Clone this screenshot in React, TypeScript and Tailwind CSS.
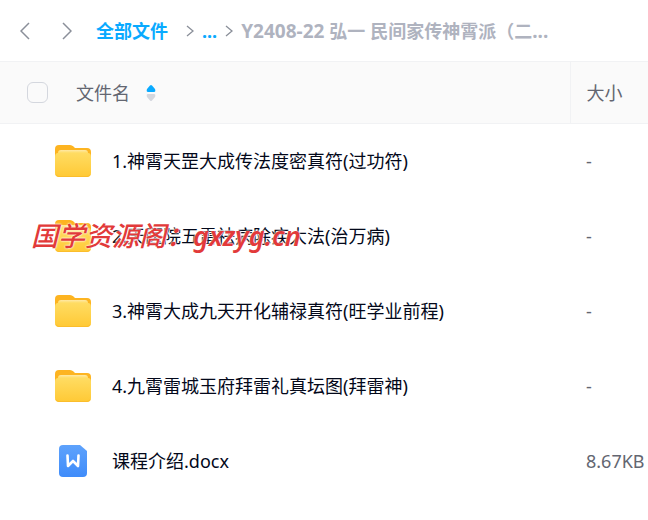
import { useState } from 'react';

const CHEVRON = 'fill-none stroke-[#8a8f99]';

const FILES = [
  { name: '1.神霄天罡大成传法度密真符(过功符)', size: '-', type: 'folder' },
  { name: '2.天医院五雷祛病除疾大法(治万病)', size: '-', type: 'folder' },
  { name: '3.神霄大成九天开化辅禄真符(旺学业前程)', size: '-', type: 'folder' },
  { name: '4.九霄雷城玉府拜雷礼真坛图(拜雷神)', size: '-', type: 'folder' },
  { name: '课程介绍.docx', size: '8.67KB', type: 'doc' },
];

function FolderIcon() {
  return (
    <svg width="36" height="32" viewBox="0 0 36 32" aria-hidden="true">
      <defs>
        <linearGradient id="front" x1="0" y1="0" x2="0" y2="1">
          <stop offset="0" stopColor="#ffdc62" />
          <stop offset="1" stopColor="#ffc935" />
        </linearGradient>
        <linearGradient id="paper" x1="0" y1="0" x2="0" y2="1">
          <stop offset="0" stopColor="#ffe9a6" />
          <stop offset="1" stopColor="#ffdc62" />
        </linearGradient>
      </defs>
      <path d="M0 4Q0 0 4 0H15Q17 0 18.500 1.500L20 3H32Q36 3 36 7V20H0Z" fill="#fdb421" />
      <path d="M0 12Q0 8 3 8H33Q36 8 36 12V28Q36 32 32 32H4Q0 32 0 28Z" fill="url(#front)" />
      <path d="M3 8Q3 5 6 5H30Q33 5 33 8Z" fill="url(#paper)" />
      <path d="M1 29.500Q2 31.500 4 31.500H32Q34 31.500 35 29.500" fill="none" stroke="#fbbd2c" />
    </svg>
  );
}

function DocIcon() {
  return (
    <svg width="28" height="32" viewBox="0 0 28 32" aria-hidden="true">
      <defs>
        <linearGradient id="doc" x1="0" y1="0" x2="0" y2="1">
          <stop offset="0" stopColor="#5ea2fc" />
          <stop offset="1" stopColor="#3f8cfa" />
        </linearGradient>
      </defs>
      <path d="M4 0H21L28 6V28Q28 32 24 32H4Q0 32 0 28V4Q0 0 4 0Z" fill="url(#doc)" />
      <path d="M8.500 10.500L9 21L14 16L19 21L19.500 10.500" fill="none" stroke="#fff" strokeWidth="2.600" strokeLinejoin="round" strokeLinecap="round" />
    </svg>
  );
}

function Crumb() {
  return (
    <svg width="8" height="12" viewBox="0 0 8 12" className={CHEVRON} strokeWidth="1.300" aria-hidden="true">
      <path d="M1 1L7 6L1 11" />
    </svg>
  );
}

export default function App() {
  const [asc, setAsc] = useState(true);
  const [all, setAll] = useState(false);
  const rows = asc ? FILES : [...FILES].reverse();

  return (
    <div className="relative bg-white text-lg leading-6 text-[#03081a] font-['Noto_Sans','Noto_Sans_CJK_SC',sans-serif]">
      <nav className="flex h-[61px] items-center whitespace-nowrap px-5 font-bold">
        <button aria-label="后退" className="mr-8">
          <svg width="10" height="18" viewBox="0 0 10 18" className={CHEVRON} strokeWidth="1.500"><path d="M9 1L1 9L9 17" /></svg>
        </button>
        <button aria-label="前进" className="mr-6">
          <svg width="10" height="18" viewBox="0 0 10 18" className={CHEVRON} strokeWidth="1.500"><path d="M1 1L9 9L1 17" /></svg>
        </button>
        <a href="#" className="mr-[18px] text-[#09aaff]">全部文件</a>
        <Crumb />
        <a href="#" className="mx-2 text-[#09aaff]">...</a>
        <Crumb />
        <span className="ml-2 text-[#afb3bf]">
          <span className="text-[19px]">Y2408-22 </span>弘一<span className="text-[19px]"> </span>民间家传神霄派（二<span className="text-[19px]">...</span>
        </span>
      </nav>

      <table className="w-full table-fixed border-collapse text-left">
        <thead className="border-y border-[#f1f2f4] bg-[#fafafa] text-[#636671]">
          <tr className="h-[62px]">
            <th className="p-0 font-normal">
              <div className="flex items-center pl-[27px]">
                <input
                  type="checkbox"
                  aria-label="全选"
                  checked={all}
                  onChange={(e) => setAll(e.target.checked)}
                  className="mr-7 size-[21px] appearance-none rounded-md border border-[#d4d7de] bg-[#fafafa] checked:bg-[#09aaff]"
                />
                <span>文件名</span>
                <button aria-label="排序" className="ml-4" onClick={() => setAsc(!asc)}>
                  <svg width="10" height="18" viewBox="0 0 10 18">
                    <path d="M4 1.500Q5 .5 6 1.500L9 5Q10 8 8 8H2Q0 8 1 5Z" fill="#09aaff" />
                    <path d="M4 16.500Q5 17.500 6 16.500L9 13Q10 10 8 10H2Q0 10 1 13Z" fill="#d4d7de" />
                  </svg>
                </button>
              </div>
            </th>
            <th className="w-[78px] border-l border-[#f1f2f4] p-0 pl-4 font-normal">大小</th>
          </tr>
        </thead>
        <tbody>
          {rows.map((f) => (
            <tr key={f.name} className="h-[75px]">
              <td className="p-0">
                <div className="flex items-center whitespace-nowrap pl-[55px]">
                  <span className="mr-[21px] flex w-9 justify-center">
                    {f.type === 'folder' ? <FolderIcon /> : <DocIcon />}
                  </span>
                  <span>{f.name}</span>
                </div>
              </td>
              <td className="whitespace-nowrap p-0 pl-4 text-[#636671]">{f.size}</td>
            </tr>
          ))}
        </tbody>
      </table>

      <p className="pointer-events-none absolute left-[31px] top-[218px] whitespace-nowrap text-[27px] leading-9 font-medium italic text-[#e23a3a] [text-shadow:0_0_2px_#fff,0_0_2px_#fff]">
        国学资源阁：<span className="font-semibold">gxzyg.cn</span>
      </p>
    </div>
  );
}
